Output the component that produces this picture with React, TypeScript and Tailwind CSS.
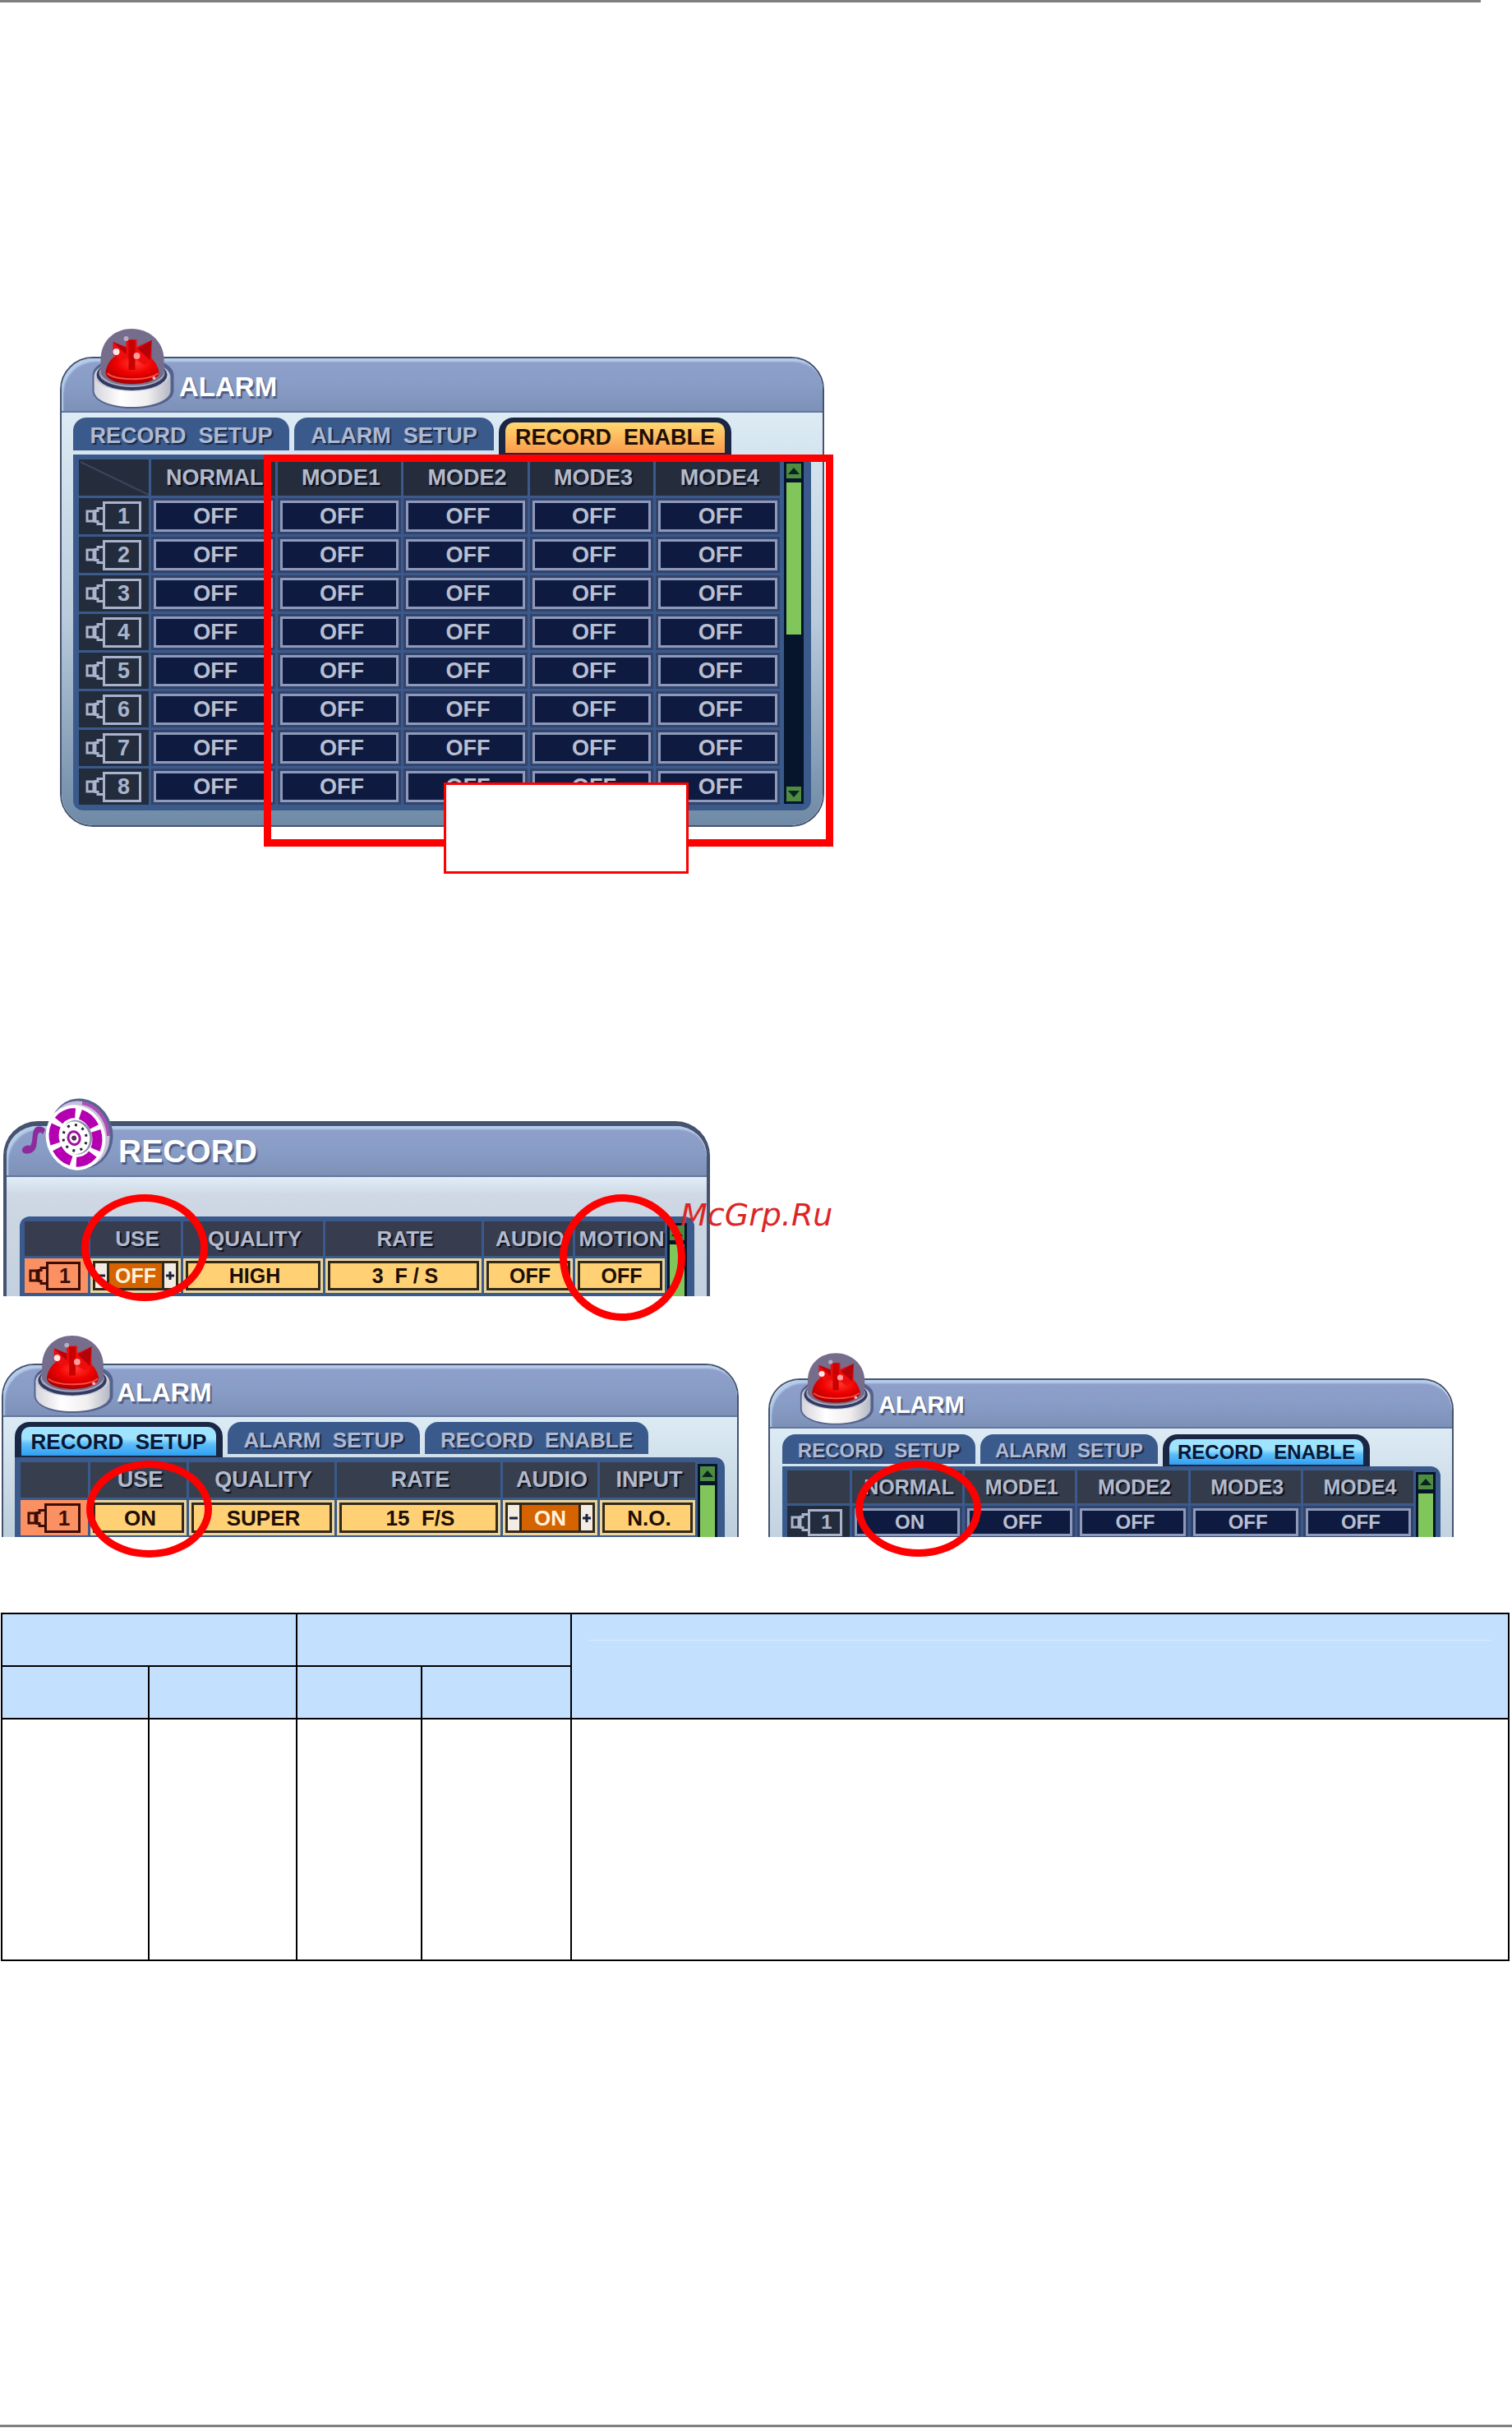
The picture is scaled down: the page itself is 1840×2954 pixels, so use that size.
import React from 'react';

type Skin = {
  row: string;
  head: string;
  headText: string;
  cellText: string;
  camera: string;
};

type Tab = { label: string; width: string; active?: 'orange' | 'blue' };

const largeSkin: Skin = { row: 'h-11', head: 'bg-[#252d3d]', headText: 'text-[27px]', cellText: 'text-[27px]', camera: 'w-[47px]' };
const recordSkin: Skin = { row: 'h-[42px]', head: 'bg-[#373c4e]', headText: 'text-[26px]', cellText: 'text-[25px]', camera: 'w-[42px]' };
const alarmSkin: Skin = { row: 'h-[43px]', head: 'bg-[#373f4e]', headText: 'text-[27px]', cellText: 'text-[26px]', camera: 'w-[44px]' };
const smallSkin: Skin = { row: 'h-10', head: 'bg-[#343c4b]', headText: 'text-[25px]', cellText: 'text-2xl', camera: 'w-[42px]' };

const Siren = ({ id, className }: { id: string; className: string }) => (
  <svg viewBox="0 0 100 98" className={className} aria-hidden="true">
    <defs>
      <linearGradient id={`${id}-base`} x1="0" x2="1">
        <stop offset="0" stopColor="#d4d4dc" />
        <stop offset="0.35" stopColor="#ffffff" />
        <stop offset="0.7" stopColor="#f0eeee" />
        <stop offset="1" stopColor="#b4b8c4" />
      </linearGradient>
      <radialGradient id={`${id}-red`} cx="0.55" cy="0.3" r="0.7">
        <stop offset="0" stopColor="#ff3a30" />
        <stop offset="0.5" stopColor="#f00000" />
        <stop offset="1" stopColor="#a80000" />
      </radialGradient>
    </defs>
    <path d="M1 58C1 44 20 36 50 36s50 8 50 22v18c0 14-22 22-51 22S1 88 1 76z" fill="#56628e" />
    <path d="M3 60c0-12 20-20 46-20s47 8 47 20v16c0 12-21 20-47 20S3 88 3 76z" fill={`url(#${id}-base)`} />
    <ellipse cx="49" cy="58" rx="46" ry="19" fill="#c9cbd6" />
    <ellipse cx="49" cy="57" rx="43" ry="19" fill="#2f3b62" />
    <ellipse cx="49" cy="55" rx="40" ry="17" fill="#aba6ba" />
    <path d="M11 56V37C12 14 29 1 49 1s38 14 39 36v19c-6 9-20 14-39 14S17 65 11 56z" fill="#766c8b" />
    <path d="M17 54c1-10 8-20 17-22h30c10 3 16 12 18 22 0 8-14 14-33 14S17 62 17 54z" fill={`url(#${id}-red)`} />
    <path d="M26 17l16 6v-9h13v9l18-8v24l-9 6-14-10-15 4-9-7z" fill="#ee0c0c" />
    <path d="M45 15h8v36h-8z" fill="#c80000" />
    <path d="M26 17l16 7v8zM73 15L56 25l15 14z" fill="#b30208" />
    <path d="M19 55c9 9 50 10 62 0" stroke="#ff4a42" strokeWidth="2" fill="none" />
    <circle cx="30" cy="29" r="4" fill="#ffe8e8" />
    <circle cx="55" cy="34" r="4" fill="#ff9c9c" />
    <circle cx="42" cy="13" r="3" fill="#b6adc2" />
    <circle cx="76" cy="61" r="2" fill="#ffb4b4" />
  </svg>
);

const Reel = () => (
  <svg viewBox="0 0 112 90" className="h-[90px] w-28 shrink-0" aria-hidden="true">
    <path d="M1 62c3-5 7-5 10-4 4-6 1-17 6-22 5-3 10-1 12 2l-3 6c-2-3-5-3-6 1-2 9 0 17-7 21-6 3-13 2-12-4z" fill="#8d2c9c" />
    <ellipse cx="73" cy="43" rx="38" ry="43" fill="#56648e" transform="rotate(-18 73 43)" />
    <ellipse cx="71" cy="44" rx="36" ry="41" fill="#c9bfdc" transform="rotate(-18 71 44)" />
    <path d="M74 6c18 3 31 20 32 40" stroke="#b04cb8" strokeWidth="4" fill="none" />
    <g transform="rotate(-18 66 48)">
      <ellipse cx="66" cy="48" rx="36" ry="40" fill="#ffffff" />
      <ellipse cx="66" cy="48" rx="26" ry="30" fill="none" stroke="#b400b0" strokeWidth="12" strokeDasharray="23 6.4" />
      <ellipse cx="67" cy="48" rx="19" ry="21" fill="#8e92a8" />
      <ellipse cx="65" cy="48" rx="18" ry="20" fill="#ffffff" />
      <ellipse cx="65" cy="48" rx="14" ry="16" fill="none" stroke="#2a2234" strokeWidth="3" strokeDasharray="3 6.4" />
      <ellipse cx="64" cy="48" rx="7" ry="8" fill="#ffffff" stroke="#a2109e" strokeWidth="3" />
      <circle cx="64" cy="48" r="3" fill="#5a2a60" />
    </g>
  </svg>
);

const Camera = ({ no, skin, selected }: { no: number; skin: Skin; selected?: boolean }) => (
  <div className={`flex h-full items-center justify-end pr-[9px] ${selected ? 'bg-[#fb9062] text-[#3c0d05]' : 'bg-[#232c3d] text-[#a9b4cc]'}`}>
    <svg viewBox="0 0 21 24" className="h-6 w-[21px] shrink-0" fill="none" stroke="currentColor" strokeWidth="3" aria-hidden="true">
      <path d="M2 6h8v12H2zM21 2.5h-6v3h-3v13h3v3h6" />
    </svg>
    <div className={`flex h-[calc(100%-7px)] items-center justify-center border-[3px] border-current pl-1 leading-none ${skin.camera}`}>{no}</div>
  </div>
);

const Cell = ({ value, selected, stepper }: { value: string; selected?: boolean; stepper?: boolean }) => {
  if (!selected) {
    return (
      <div className="h-full bg-[#33436a] p-[3px]">
        <div className="flex h-full items-center justify-center border-[3px] border-[#8d9abb] bg-[#0e1a3f] pl-[6px] leading-none text-[#b9bfd0]">{value}</div>
      </div>
    );
  }
  return (
    <div className="h-full bg-[#ead69c] p-[3px]">
      {stepper ? (
        <div className="flex h-full items-stretch border-[3px] border-[#33281c] bg-[#33281c] leading-none">
          <button type="button" aria-label="Previous value" className="flex w-[14px] items-center justify-center bg-[#f2ece2] text-[#1b2138]">
            <svg viewBox="0 0 10 10" className="h-[10px] w-[10px]" stroke="currentColor" strokeWidth="3"><path d="M0 5h10" /></svg>
          </button>
          <span className="mx-[3px] flex flex-1 items-center justify-center bg-[#d56300] text-[#fff3dd]">{value}</span>
          <button type="button" aria-label="Next value" className="flex w-[14px] items-center justify-center bg-[#f2ece2] text-[#1b2138]">
            <svg viewBox="0 0 10 10" className="h-[10px] w-[10px]" stroke="currentColor" strokeWidth="3"><path d="M0 5h10M5 0v10" /></svg>
          </button>
        </div>
      ) : (
        <div className="flex h-full items-center justify-center border-[3px] border-[#33281c] bg-[#ffd174] pl-1 leading-none whitespace-pre text-[#1d0f05]">{value}</div>
      )}
    </div>
  );
};

const ScrollBar = ({ full }: { full?: boolean }) => (
  <div className="mt-[5px] flex w-6 shrink-0 flex-col gap-[5px] bg-[#06152c] p-[3px]">
    <button type="button" aria-label="Scroll up" className="flex h-[18px] shrink-0 items-center justify-center bg-[#4d8c41]">
      <svg viewBox="0 0 14 8" className="h-2 w-[14px]" fill="#06251c"><path d="M7 0l7 8H0z" /></svg>
    </button>
    {full ? (
      <>
        <div className="h-[185px] bg-[#80c65a]" />
        <div className="flex-1" />
        <button type="button" aria-label="Scroll down" className="flex h-[18px] shrink-0 items-center justify-center bg-[#4d8c41]">
          <svg viewBox="0 0 14 8" className="h-2 w-[14px]" fill="#06251c"><path d="M7 8L0 0h14z" /></svg>
        </button>
      </>
    ) : (
      <div className="min-h-20 flex-1 bg-[#80c65a]" />
    )}
  </div>
);

type GridProps = {
  skin: Skin;
  columns: string[];
  widths: string[];
  rows: string[][];
  selected?: boolean;
  stepper?: number;
  diagonal?: boolean;
};

const Grid = ({ skin, columns, widths, rows, selected, stepper, diagonal }: GridProps) => (
  <table className="h-px w-full min-w-0 flex-1 table-fixed border-separate border-spacing-[3px] self-start font-bold">
    <colgroup>
      {widths.map((w, i) => (
        <col key={i} className={w} />
      ))}
    </colgroup>
    <thead>
      <tr className={skin.row}>
        <td className={`p-0 ${skin.head}`}>
          {diagonal && (
            <svg viewBox="0 0 85 43" preserveAspectRatio="none" className="block h-[43px] w-full" stroke="#39465e" strokeWidth="2">
              <path d="M2 2l83 40" />
            </svg>
          )}
        </td>
        {columns.map((c) => (
          <th key={c} scope="col" className={`p-0 pl-1 text-center leading-none text-[#b3bacb] [text-shadow:2px_2px_1px_#0a1020] ${skin.head} ${skin.headText}`}>
            {c}
          </th>
        ))}
      </tr>
    </thead>
    <tbody>
      {rows.map((cells, r) => (
        <tr key={r} className={`${skin.row} ${skin.cellText}`}>
          <th scope="row" className="h-full p-0">
            <Camera no={r + 1} skin={skin} selected={selected} />
          </th>
          {cells.map((value, i) => (
            <td key={i} className="h-full p-0">
              <Cell value={value} selected={selected} stepper={stepper === i} />
            </td>
          ))}
        </tr>
      ))}
    </tbody>
  </table>
);

const Tabs = ({ tabs, className, inactive }: { tabs: Tab[]; className: string; inactive: string }) => (
  <div className={`flex items-start gap-[6px] font-bold whitespace-pre ${className}`}>
    {tabs.map((t) =>
      t.active ? (
        <button key={t.label} type="button" className={`h-full shrink-0 rounded-t-[18px] bg-[#1a2744] px-2 pt-[6px] pb-[2px] leading-none ${t.width}`}>
          <span
            className={`flex h-full items-center justify-center rounded-t-[10px] ${
              t.active === 'orange'
                ? 'bg-linear-to-b from-[#ffd970] to-[#f99a4c] text-[#1d0f05]'
                : 'bg-linear-to-b from-[#9fe4ff] from-40% via-[#5bbdf8] via-60% to-[#2f9ff0] text-[#0a1634]'
            }`}
          >
            {t.label}
          </span>
        </button>
      ) : (
        <button key={t.label} type="button" className={`flex shrink-0 items-center justify-center rounded-t-[16px] bg-[#3b5a8c] pt-1 leading-none text-[#aeb9d2] [text-shadow:2px_2px_1px_#182746] ${inactive} ${t.width}`}>
          {t.label}
        </button>
      )
    )}
  </div>
);

type PanelProps = {
  icon: React.ReactNode;
  title: string;
  headerClass: string;
  bodyClass: string;
  frameClass: string;
  children: React.ReactNode;
};

const Panel = ({ icon, title, headerClass, bodyClass, frameClass, children }: PanelProps) => (
  <div className={`border-[#465370] ${frameClass}`}>
    <div className={`flex items-end rounded-t-[38px] border-b-2 border-[#64769e] bg-linear-to-b from-[#8f9fcb] via-[#889dc6] to-[#7d90b8] shadow-[inset_3px_5px_2px_-1px_#b5cdea] ${headerClass}`}>
      {icon}
      <h2 className="self-center pt-1 leading-none font-bold text-white [text-shadow:2px_3px_1px_#4d5d85]">{title}</h2>
    </div>
    <div className={`flex flex-col ${bodyClass}`}>{children}</div>
  </div>
);

const Circle = ({ className }: { className: string }) => (
  <div className={`pointer-events-none absolute rounded-[50%] border-[9px] border-[#ff0000] ${className}`} />
);

const modes = ['NORMAL', 'MODE1', 'MODE2', 'MODE3', 'MODE4'];
const allOff = ['OFF', 'OFF', 'OFF', 'OFF', 'OFF'];

const App = () => {
  return (
    <main className="w-full overflow-x-hidden bg-white font-['Liberation_Sans',Arial,sans-serif]">
      <hr className="mr-[38px] h-[3px] border-0 bg-[#808080]" />

      {/* Alarm > record enable */}
      <section className="relative mt-[431px] ml-[73px] w-full max-w-[930px]">
        <Panel
          icon={<Siren id="s1" className="mb-[3px] h-[98px] w-[101px] shrink-0" />}
          title="ALARM"
          frameClass="rounded-[40px] border-2"
          headerClass="h-[66px] gap-[6px] pl-9 text-[33px]"
          bodyClass="rounded-b-[38px] bg-linear-to-b from-[#dcebf4] via-[#b9cbdc] to-[#6f8aa6] px-[14px] pt-[6px] pb-[18px]"
        >
          <Tabs
            className="h-[45px] text-[27px]"
            inactive="h-10"
            tabs={[
              { label: 'RECORD  SETUP', width: 'w-[263px]' },
              { label: 'ALARM  SETUP', width: 'w-[243px]' },
              { label: 'RECORD  ENABLE', width: 'w-[283px]', active: 'orange' },
            ]}
          />
          <div className="flex rounded-tr-xl rounded-b-xl bg-[#3b5a8c] pt-[3px] pr-[9px] pb-1 pl-1">
            <Grid skin={largeSkin} columns={modes} widths={['w-[85px]', '', '', '', '', '']} rows={Array.from({ length: 8 }, () => allOff)} diagonal />
            <div className="mb-1 ml-[2px] flex">
              <ScrollBar full />
            </div>
          </div>
        </Panel>
        <div className="pointer-events-none absolute top-[119px] -right-[11px] -bottom-6 left-[248px] border-[9px] border-[#ff0000]" />
        <div className="absolute top-[518px] left-[467px] h-[111px] w-[298px] border-[3px] border-[#ff0000] bg-white" />
      </section>

      {/* Record */}
      <section className="relative mt-[358px] ml-1 w-full max-w-[860px]">
        <Panel
          icon={<Reel />}
          title="RECORD"
          frameClass="rounded-t-[42px] border-x-4 border-t-[6px]"
          headerClass="h-[62px] gap-[6px] pb-1 pl-[18px] text-[39px]"
          bodyClass="h-[145px] overflow-hidden bg-linear-to-b from-[#dfeef8] from-0% via-[#cfd8e4] via-15% to-[#c2d0df] pt-12 pr-[15px] pl-4"
        >
          <div className="flex flex-1 rounded-t-xl bg-[#3b5a8c] pt-[3px] pr-[9px] pl-[3px]">
            <Grid
              skin={recordSkin}
              columns={['USE', 'QUALITY', 'RATE', 'AUDIO', 'MOTION']}
              widths={['w-[77px]', 'w-[110px]', 'w-[170px]', 'w-[190px]', 'w-[108px]', '']}
              rows={[['OFF', 'HIGH', '3  F / S', 'OFF', 'OFF']]}
              selected
              stepper={0}
            />
            <ScrollBar />
          </div>
        </Panel>
        <Circle className="top-[89px] left-[95px] h-[130px] w-[154px]" />
        <Circle className="top-[89px] left-[677px] h-[154px] w-[153px]" />
        <span className="absolute top-[86px] left-[824px] font-['DejaVu_Sans',sans-serif] text-[38px] leading-[56px] text-[#dc2626] italic">McGrp.Ru</span>
      </section>

      {/* Alarm pages side by side */}
      <div className="mt-[82px] grid grid-cols-[897fr_834fr] items-end gap-9 pr-[71px] pl-[2px]">
        <section className="relative">
          <Panel
            icon={<Siren id="s2" className="mb-[3px] h-[95px] w-[98px] shrink-0" />}
            title="ALARM"
            frameClass="rounded-t-[40px] border-x-2 border-t-2"
            headerClass="h-[63px] gap-1 pl-9 text-[32px]"
            bodyClass="h-[146px] overflow-hidden bg-linear-to-b from-[#dcebf4] to-[#bccddb] pt-[6px] pr-[15px] pl-[14px]"
          >
            <Tabs
              className="h-[43px] shrink-0 text-[26px]"
              inactive="h-[39px]"
              tabs={[
                { label: 'RECORD  SETUP', width: 'w-[253px]', active: 'blue' },
                { label: 'ALARM  SETUP', width: 'w-[234px]' },
                { label: 'RECORD  ENABLE', width: 'w-[272px]' },
              ]}
            />
            <div className="flex flex-1 rounded-tr-xl bg-[#3b5a8c] pt-[3px] pr-[9px] pl-1">
              <Grid
                skin={alarmSkin}
                columns={['USE', 'QUALITY', 'RATE', 'AUDIO', 'INPUT']}
                widths={['w-[82px]', 'w-[117px]', 'w-[177px]', 'w-[199px]', 'w-[115px]', '']}
                rows={[['ON', 'SUPER', '15  F/S', 'ON', 'N.O.']]}
                selected
                stepper={3}
              />
              <ScrollBar />
            </div>
          </Panel>
          <Circle className="top-[118px] left-[103px] h-[118px] w-[153px]" />
        </section>

        <section className="relative">
          <Panel
            icon={<Siren id="s3" className="mb-[2px] h-[89px] w-[90px] shrink-0" />}
            title="ALARM"
            frameClass="rounded-t-[38px] border-x-2 border-t-2"
            headerClass="h-[59px] gap-[6px] pl-9 text-[29px]"
            bodyClass="h-[132px] overflow-hidden bg-linear-to-b from-[#dcebf4] to-[#c2d2df] pt-[7px] pr-[14px] pl-[15px]"
          >
            <Tabs
              className="h-[39px] shrink-0 text-2xl"
              inactive="h-9"
              tabs={[
                { label: 'RECORD  SETUP', width: 'w-[235px]' },
                { label: 'ALARM  SETUP', width: 'w-[216px]' },
                { label: 'RECORD  ENABLE', width: 'w-[252px]', active: 'blue' },
              ]}
            />
            <div className="flex flex-1 rounded-tr-xl bg-[#3b5a8c] pt-[2px] pr-[6px] pl-[3px]">
              <Grid skin={smallSkin} columns={modes} widths={['w-[76px]', '', '', '', '', '']} rows={[['ON', 'OFF', 'OFF', 'OFF', 'OFF']]} />
              <ScrollBar />
            </div>
          </Panel>
          <Circle className="top-[100px] left-[106px] h-[117px] w-[153px]" />
        </section>
      </div>

      {/* Mode comparison table */}
      <div className="mt-[92px] pr-[3px] pl-px">
        <table className="w-full table-fixed border-collapse border-2 border-black">
          <colgroup>
            <col className="w-[179px]" />
            <col className="w-[180px]" />
            <col className="w-[152px]" />
            <col className="w-[182px]" />
            <col />
          </colgroup>
          <thead className="bg-[#c3e0ff]">
            <tr className="h-16">
              <th colSpan={2} className="border-2 border-black" />
              <th colSpan={2} className="border-2 border-black" />
              <th rowSpan={2} className="border-2 border-black px-5 pb-16">
                <div className="h-px bg-[#d9ebff]" />
              </th>
            </tr>
            <tr className="h-16">
              <th className="border-2 border-black" />
              <th className="border-2 border-black" />
              <th className="border-2 border-black" />
              <th className="border-2 border-black" />
            </tr>
          </thead>
          <tbody>
            <tr className="h-[294px]">
              <td className="border-2 border-black" />
              <td className="border-2 border-black" />
              <td className="border-2 border-black" />
              <td className="border-2 border-black" />
              <td className="border-2 border-black" />
            </tr>
          </tbody>
        </table>
      </div>

      <hr className="mt-[564px] h-[3px] border-0 bg-[#808080]" />
    </main>
  );
};

export default App;
